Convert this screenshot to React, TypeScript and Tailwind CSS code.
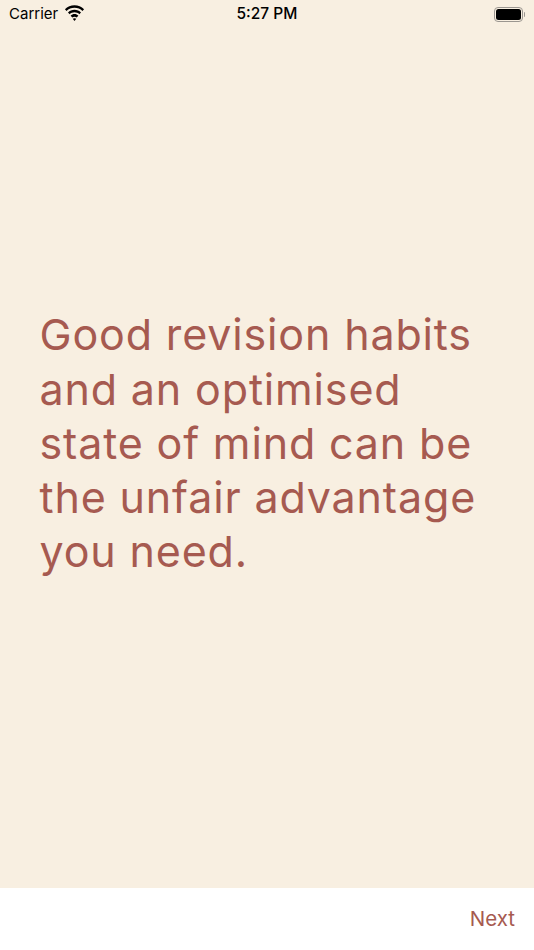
export default function App() {
  return (
    <div className="flex h-[950px] w-[534px] flex-col overflow-hidden bg-[#f8efe1] font-['Inter',sans-serif]">
      <div className="grid h-7 grid-cols-3 items-center px-[9px] text-black">
        <div className="flex items-center gap-[6px] text-[15px]">
          <span>Carrier</span>
          <svg width="21" height="16" viewBox="0 0 20 15" fill="currentColor" className="mb-[3px]">
            <path d="M10 2.6c2.9 0 5.6 1.100 7.600 3l1.500-1.600C16.700 1.600 13.500.2 10 .2S3.300 1.600.9 4l1.500 1.600c2-1.900 4.700-3 7.600-3z" />
            <path d="M10 6.800c1.800 0 3.400.7 4.600 1.800l1.600-1.600C14.600 5.400 12.400 4.400 10 4.400S5.400 5.400 3.800 7l1.600 1.600C6.600 7.500 8.200 6.800 10 6.800z" />
            <path d="M10 11c.8 0 1.500.3 2 .8l1.700-1.700C12.700 9.100 11.400 8.500 10 8.500s-2.700.6-3.700 1.600L8 11.800c.5-.5 1.200-.8 2-.8z" />
            <path d="M10 15l1.700-2c-.5-.4-1.100-.6-1.700-.6s-1.200.2-1.700.6z" />
          </svg>
        </div>
        <div className="text-center text-[15.500px] font-medium">5:27 PM</div>
        <div className="flex items-center justify-end">
          <div className="flex h-[15px] w-[29px] items-center rounded-[4px] border border-[#9b9690] p-px">
            <div className="h-full w-full rounded-[2.500px] bg-black" />
          </div>
          <div className="ml-px h-[5px] w-px rounded-r-sm bg-[#9b9690]" />
        </div>
      </div>
      <div className="flex flex-1 flex-col justify-center pl-[39.500px] pr-8 pb-[30px]">
        <p className="text-[43px] leading-[54.300px] tracking-[0.85px] text-[#a65a50]">
          Good revision habits
          <br />
          and an optimised
          <br />
          state of mind can be
          <br />
          the unfair advantage
          <br />
          you need.
        </p>
      </div>
      <div className="flex h-[62px] items-start justify-end bg-white px-[19px] pt-[17px]">
        <span className="text-[20.500px] leading-[28px] text-[#a65a50]">Next</span>
      </div>
    </div>
  );
}
